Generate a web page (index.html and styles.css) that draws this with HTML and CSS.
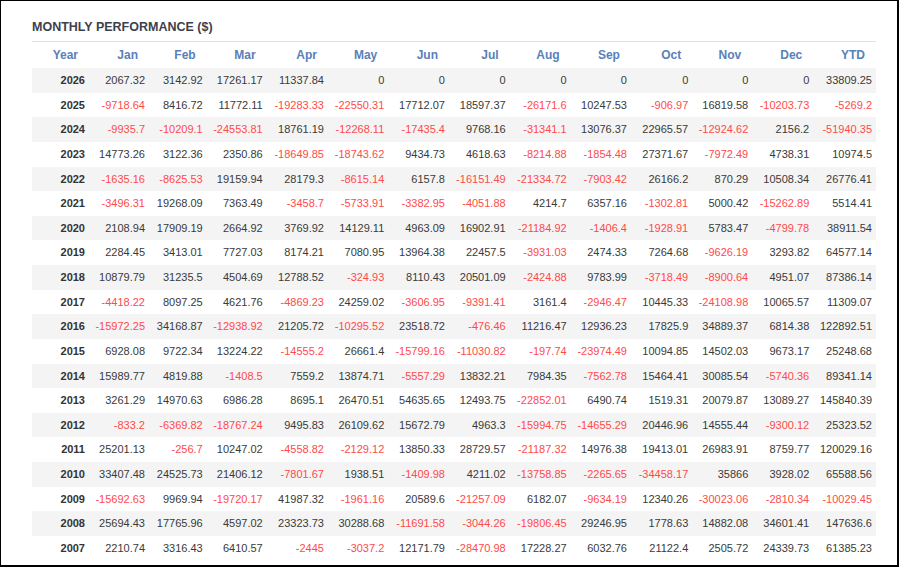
FILE: index.html
```html
<!DOCTYPE html>
<html>
<head>
<meta charset="utf-8">
<link rel="stylesheet" href="styles.css">
</head>
<body>
<div class="frame">
  <div class="title">MONTHLY PERFORMANCE ($)</div>
  <table class="perf">
    <colgroup>
      <col class="c-year"><col class="c-jan"><col class="c-feb"><col class="c-mar"><col class="c-apr"><col class="c-may"><col class="c-jun"><col class="c-jul"><col class="c-aug"><col class="c-sep"><col class="c-oct"><col class="c-nov"><col class="c-dec"><col class="c-ytd">
    </colgroup>
    <thead>
      <tr><th>Year</th><th>Jan</th><th>Feb</th><th>Mar</th><th>Apr</th><th>May</th><th>Jun</th><th>Jul</th><th>Aug</th><th>Sep</th><th>Oct</th><th>Nov</th><th>Dec</th><th>YTD</th></tr>
    </thead>
    <tbody id="rows"></tbody>
  </table>
</div>
<script src="app.js"></script>
</body>
</html>
```
FILE: app.js
```js
var data = [
["2026","2067.32","3142.92","17261.17","11337.84","0","0","0","0","0","0","0","0","33809.25"],
["2025","-9718.64","8416.72","11772.11","-19283.33","-22550.31","17712.07","18597.37","-26171.6","10247.53","-906.97","16819.58","-10203.73","-5269.2"],
["2024","-9935.7","-10209.1","-24553.81","18761.19","-12268.11","-17435.4","9768.16","-31341.1","13076.37","22965.57","-12924.62","2156.2","-51940.35"],
["2023","14773.26","3122.36","2350.86","-18649.85","-18743.62","9434.73","4618.63","-8214.88","-1854.48","27371.67","-7972.49","4738.31","10974.5"],
["2022","-1635.16","-8625.53","19159.94","28179.3","-8615.14","6157.8","-16151.49","-21334.72","-7903.42","26166.2","870.29","10508.34","26776.41"],
["2021","-3496.31","19268.09","7363.49","-3458.7","-5733.91","-3382.95","-4051.88","4214.7","6357.16","-1302.81","5000.42","-15262.89","5514.41"],
["2020","2108.94","17909.19","2664.92","3769.92","14129.11","4963.09","16902.91","-21184.92","-1406.4","-1928.91","5783.47","-4799.78","38911.54"],
["2019","2284.45","3413.01","7727.03","8174.21","7080.95","13964.38","22457.5","-3931.03","2474.33","7264.68","-9626.19","3293.82","64577.14"],
["2018","10879.79","31235.5","4504.69","12788.52","-324.93","8110.43","20501.09","-2424.88","9783.99","-3718.49","-8900.64","4951.07","87386.14"],
["2017","-4418.22","8097.25","4621.76","-4869.23","24259.02","-3606.95","-9391.41","3161.4","-2946.47","10445.33","-24108.98","10065.57","11309.07"],
["2016","-15972.25","34168.87","-12938.92","21205.72","-10295.52","23518.72","-476.46","11216.47","12936.23","17825.9","34889.37","6814.38","122892.51"],
["2015","6928.08","9722.34","13224.22","-14555.2","26661.4","-15799.16","-11030.82","-197.74","-23974.49","10094.85","14502.03","9673.17","25248.68"],
["2014","15989.77","4819.88","-1408.5","7559.2","13874.71","-5557.29","13832.21","7984.35","-7562.78","15464.41","30085.54","-5740.36","89341.14"],
["2013","3261.29","14970.63","6986.28","8695.1","26470.51","54635.65","12493.75","-22852.01","6490.74","1519.31","20079.87","13089.27","145840.39"],
["2012","-833.2","-6369.82","-18767.24","9495.83","26109.62","15672.79","4963.3","-15994.75","-14655.29","20446.96","14555.44","-9300.12","25323.52"],
["2011","25201.13","-256.7","10247.02","-4558.82","-2129.12","13850.33","28729.57","-21187.32","14976.38","19413.01","26983.91","8759.77","120029.16"],
["2010","33407.48","24525.73","21406.12","-7801.67","1938.51","-1409.98","4211.02","-13758.85","-2265.65","-34458.17","35866","3928.02","65588.56"],
["2009","-15692.63","9969.94","-19720.17","41987.32","-1961.16","20589.6","-21257.09","6182.07","-9634.19","12340.26","-30023.06","-2810.34","-10029.45"],
["2008","25694.43","17765.96","4597.02","23323.73","30288.68","-11691.58","-3044.26","-19806.45","29246.95","1778.63","14882.08","34601.41","147636.6"],
["2007","2210.74","3316.43","6410.57","-2445","-3037.2","12171.79","-28470.98","17228.27","6032.76","21122.4","2505.72","24339.73","61385.23"]
];
var tbody = document.getElementById("rows");
data.forEach(function (row) {
  var tr = document.createElement("tr");
  row.forEach(function (v, i) {
    var td = document.createElement("td");
    td.textContent = v;
    if (i === 0) td.className = "yr";
    else if (v.charAt(0) === "-") td.className = "neg";
    tr.appendChild(td);
  });
  tbody.appendChild(tr);
});
```
FILE: styles.css
```css
html, body {
  margin: 0;
  padding: 0;
  background: #fff;
}
.frame {
  box-sizing: border-box;
  width: 899px;
  height: 567px;
  border-style: solid;
  border-color: #000;
  border-width: 1px 2px 2px 1px;
  padding: 12px 21px 0 31px;
  font-family: "Liberation Sans", Arial, sans-serif;
  overflow: hidden;
}
.title {
  height: 28px;
  line-height: 28px;
  font-size: 12.5px;
  font-weight: bold;
  color: #3e3f4c;
}
.perf {
  width: 844px;
  table-layout: fixed;
  border-collapse: collapse;
  border-spacing: 0;
  border-top: 1px solid #e2e2e2;
}
.c-year { width: 57px; }
.c-jan { width: 60px; }
.c-feb { width: 57.7px; }
.c-mar { width: 60px; }
.c-apr { width: 61.3px; }
.c-may { width: 60.3px; }
.c-jun { width: 60.7px; }
.c-jul { width: 60.7px; }
.c-aug { width: 61px; }
.c-sep { width: 60.3px; }
.c-oct { width: 61.3px; }
.c-nov { width: 60px; }
.c-dec { width: 61px; }
.c-ytd { width: 62.7px; }
.perf th {
  height: 26px;
  padding: 0 11px 0 0;
  text-align: right;
  font-size: 12px;
  font-weight: bold;
  color: #5a80b9;
  line-height: 26px;
  white-space: nowrap;
}
.perf td {
  height: 24.63px;
  padding: 0 4px 0 0;
  text-align: right;
  font-size: 11px;
  color: #3a3a3a;
  line-height: 24.63px;
  white-space: nowrap;
}
.perf tbody tr:nth-child(odd) {
  background: #f4f4f4;
}
.perf td.yr {
  font-weight: bold;
  color: #333;
}
.perf td.neg {
  color: #ff4a4a;
}
```
